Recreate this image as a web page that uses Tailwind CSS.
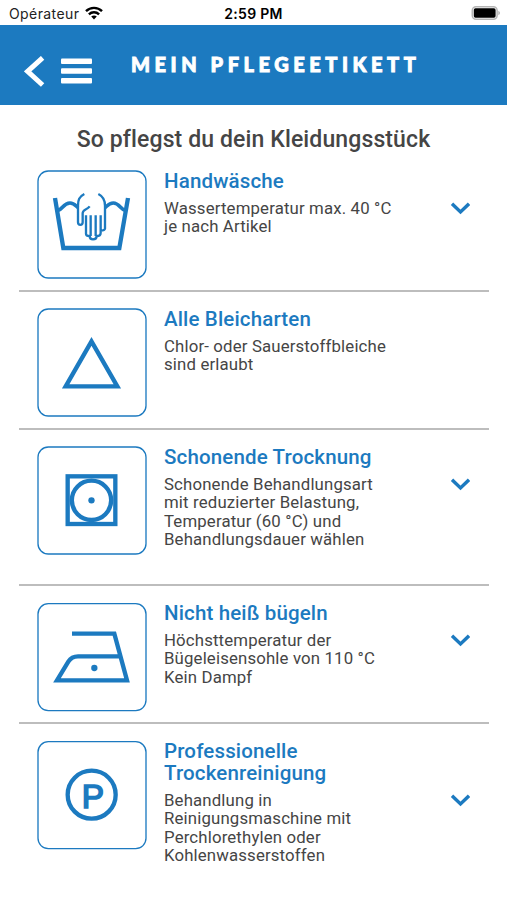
<!DOCTYPE html>
<html lang="de">
<head>
    <meta charset="UTF-8">
    <meta name="viewport" content="width=device-width, initial-scale=1.0">
    <title>Mein Pflegeetikett</title>
    <script src="https://cdn.jsdelivr.net/npm/@tailwindcss/browser@4"></script>
</head>
<body class="bg-white h-[900px] overflow-hidden font-['Roboto',sans-serif] text-[#454545]">
    <!-- Statusleiste -->
    <div class="h-[25px] px-[9px] grid grid-cols-3 items-center font-['Inter',sans-serif] text-black">
        <div class="flex items-center pt-[3px]">
            <span class="text-[14px] leading-5 tracking-[0.4px] text-[#222]">Opérateur</span>
            <svg class="w-[18px] h-[14px] ml-[6px] mb-[2px]" viewBox="0 0 18 14" fill="none" stroke="#000" stroke-width="2.4">
                <path d="M1 5.2C5.5 .7 12.5 .7 17 5.2"/>
                <path d="M3.9 8.3C6.8 5.5 11.2 5.5 14.1 8.3"/>
                <path d="M6.2 10.5C7.8 9 10.2 9 11.8 10.5L9 13.4Z" fill="#000" stroke="none"/>
            </svg>
        </div>
        <p class="text-center text-[14px] font-semibold leading-5 tracking-[0.3px] pt-[3px]">2:59 PM</p>
        <svg class="justify-self-end w-[30px] h-[14px] -mr-[3px] mt-px" viewBox="0 0 31 15">
            <rect x=".8" y=".8" width="26.6" height="13.4" rx="4" fill="#fff" stroke="#b5b5b5" stroke-width="1.6"/>
            <rect x="2.4" y="2.4" width="23.4" height="10.200" rx="1.8" fill="#000"/>
            <path d="M28.7 5.2Q30.5 6 30.5 7.5T28.7 9.8Z" fill="#b5b5b5"/>
        </svg>
    </div>

    <header class="h-[80px] bg-[#1c7ac0] text-white flex items-start">
        <svg class="w-[22px] h-[32px] ml-[24px] mt-[31px]" viewBox="0 0 22 32" fill="none" stroke="#fff" stroke-width="5">
            <path d="M18.6 1.8L3.6 15.4L18.6 29"/>
        </svg>
        <svg class="w-[32px] h-[26px] ml-[15px] mt-[33px]" viewBox="0 0 32 26" fill="#fff">
            <rect x="0" y=".5" width="31" height="5.6" rx="1"/>
            <rect x="0" y="10.2" width="31" height="5.6" rx="1"/>
            <rect x="0" y="20" width="31" height="5.6" rx="1"/>
        </svg>
        <h1 class="ml-[38px] mt-[25px] font-['Lato',sans-serif] font-black text-[20px] leading-7 tracking-[4.55px] whitespace-nowrap [-webkit-text-stroke:0.9px_white]">MEIN PFLEGEETIKETT</h1>
    </header>

    <main>
        <h2 class="text-center text-[23px] font-medium leading-8 tracking-[0.12px] pt-[19px] h-[48px]">So pflegst du dein Kleidungsstück</h2>

        <ul class="ml-[19px] mr-[18px]">
            <li class="h-[139px] flex border-b-2 border-[#bdbdbd] pl-[18px] pr-[19px] pt-[17px]">
                <svg class="shrink-0 w-[110px] h-[110px]" viewBox="21 14 330 330" fill="none" stroke="#1c7ac0">
                    <rect x="24" y="17" width="324" height="321" rx="31" stroke-width="4"/>
                    <path d="M75 98L100 248H268L294 98" stroke-width="13"/>
                    <path d="M84 135C97 133 100 113 120 113C132 113 136 120 144 127M225 127C233 120 238 113 250 113C268 113 272 133 286 135" stroke-width="11"/>
                    <path d="M163 86C147 94 144 104 144 121V171C144 181 158 181 158 171V144C158 132 170 135 179 123M205 86C219 93 225 103 225 121V190Q224 196 212 196M168 150V205Q168 212 179 212Q179 222 189 222Q200 222 200 212Q212 212 212 202V150M182 150V212M197 150V212" stroke-width="7"/>
                </svg>
                <div class="ml-[17px] w-[245px]">
                    <h3 class="text-[20.5px] leading-[22px] font-medium tracking-[0.15px] text-[#1c7ac0]">Handwäsche</h3>
                    <p class="mt-[7px] text-[16.8px] leading-[18.4px] tracking-[0.15px]">Wassertemperatur max. 40 °C<br>je nach Artikel</p>
                </div>
                <svg class="ml-auto mt-[32px] w-[20px] h-[13px]" viewBox="0 0 20 13" fill="none" stroke="#1c7ac0" stroke-width="3.4"><path d="M2 1.8L10.5 10L19 1.8"/></svg>
            </li>

            <li class="h-[138px] flex border-b-2 border-[#bdbdbd] pl-[18px] pr-[19px] pt-[16px]">
                <svg class="shrink-0 w-[110px] h-[110px]" viewBox="21 24 330 330" fill="none" stroke="#1c7ac0">
                    <rect x="24" y="27" width="324" height="321" rx="31" stroke-width="4"/>
                    <path d="M184.500 124L107 259H262Z" stroke-width="13"/>
                </svg>
                <div class="ml-[17px] w-[245px]">
                    <h3 class="text-[20.5px] leading-[22px] font-medium tracking-[0.15px] text-[#1c7ac0]">Alle Bleicharten</h3>
                    <p class="mt-[7px] text-[16.8px] leading-[18.4px] tracking-[0.15px]">Chlor- oder Sauerstoffbleiche<br>sind erlaubt</p>
                </div>
            </li>

            <li class="h-[156px] flex border-b-2 border-[#bdbdbd] pl-[18px] pr-[19px] pt-[16px]">
                <svg class="shrink-0 w-[110px] h-[110px]" viewBox="21 18 330 330" fill="none" stroke="#1c7ac0">
                    <rect x="24" y="21" width="324" height="321" rx="31" stroke-width="4"/>
                    <rect x="113" y="109" width="143" height="143" stroke-width="13"/>
                    <circle cx="184.500" cy="181" r="59" stroke-width="13"/>
                    <circle cx="184.500" cy="181" r="9.500" fill="#1c7ac0" stroke="none"/>
                </svg>
                <div class="ml-[17px] w-[245px]">
                    <h3 class="text-[20.5px] leading-[22px] font-medium tracking-[0.15px] text-[#1c7ac0]">Schonende Trocknung</h3>
                    <p class="mt-[7px] text-[16.8px] leading-[18.4px] tracking-[0.15px]">Schonende Behandlungsart<br>mit reduzierter Belastung,<br>Temperatur (60 °C) und<br>Behandlungsdauer wählen</p>
                </div>
                <svg class="ml-auto mt-[32px] w-[20px] h-[13px]" viewBox="0 0 20 13" fill="none" stroke="#1c7ac0" stroke-width="3.4"><path d="M2 1.8L10.5 10L19 1.8"/></svg>
            </li>

            <li class="h-[138px] flex border-b-2 border-[#bdbdbd] pl-[18px] pr-[19px] pt-[16px]">
                <svg class="shrink-0 w-[110px] h-[110px]" viewBox="21 15 330 330" fill="none" stroke="#1c7ac0">
                    <rect x="24" y="20" width="324" height="321" rx="31" stroke-width="4"/>
                    <path d="M126 110H253L291 250H81L115 194Q125 178 144 178H267" stroke-width="13"/>
                    <circle cx="193" cy="213" r="9.500" fill="#1c7ac0" stroke="none"/>
                </svg>
                <div class="ml-[17px] w-[245px]">
                    <h3 class="text-[20.5px] leading-[22px] font-medium tracking-[0.15px] text-[#1c7ac0]">Nicht heiß bügeln</h3>
                    <p class="mt-[7px] text-[16.8px] leading-[18.4px] tracking-[0.15px]">Höchsttemperatur der<br>Bügeleisensohle von 110 °C<br>Kein Dampf</p>
                </div>
                <svg class="ml-auto mt-[32px] w-[20px] h-[13px]" viewBox="0 0 20 13" fill="none" stroke="#1c7ac0" stroke-width="3.4"><path d="M2 1.8L10.5 10L19 1.8"/></svg>
            </li>

            <li class="flex pl-[18px] pr-[19px] pt-[16px]">
                <svg class="shrink-0 w-[110px] h-[110px]" viewBox="21 15 330 330" fill="none" stroke="#1c7ac0">
                    <rect x="24" y="20" width="324" height="321" rx="31" stroke-width="4"/>
                    <circle cx="185" cy="179" r="72" stroke-width="13"/>
                    <text x="155" y="218" class="font-['Liberation_Sans',sans-serif] text-[100px]" fill="#1c7ac0" stroke-width="5">P</text>
                </svg>
                <div class="ml-[17px] w-[245px]">
                    <h3 class="text-[20.5px] leading-[22px] font-medium tracking-[0.15px] text-[#1c7ac0]">Professionelle<br>Trockenreinigung</h3>
                    <p class="mt-[7px] text-[16.8px] leading-[18.4px] tracking-[0.15px]">Behandlung in<br>Reinigungsmaschine mit<br>Perchlorethylen oder<br>Kohlenwasserstoffen</p>
                </div>
                <svg class="ml-auto mt-[54px] w-[20px] h-[13px]" viewBox="0 0 20 13" fill="none" stroke="#1c7ac0" stroke-width="3.4"><path d="M2 1.8L10.5 10L19 1.8"/></svg>
            </li>
        </ul>
    </main>
</body>
</html>
